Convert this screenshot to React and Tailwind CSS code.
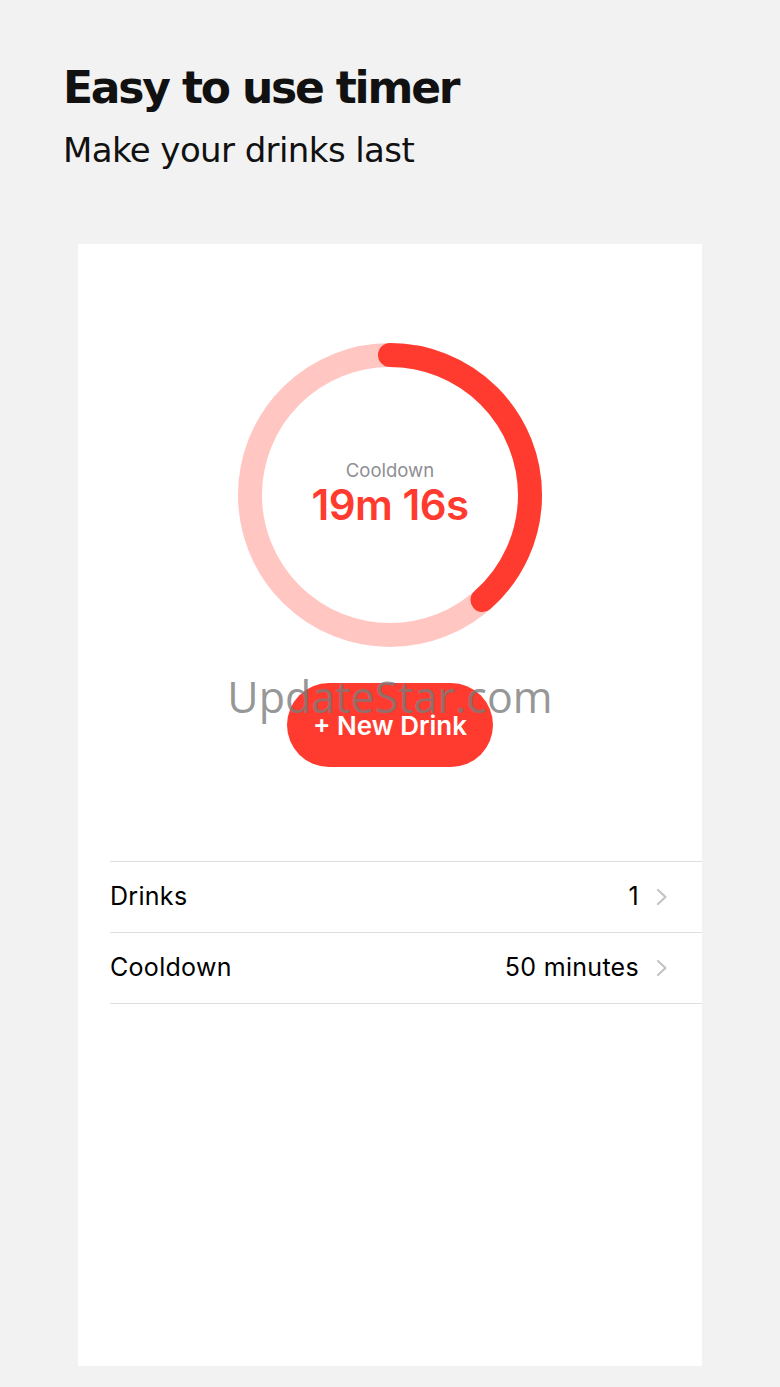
import React from "react";

const RED = "#ff3b30";

function Ring({ progress }) {
  const r = 140;
  const c = 2 * Math.PI * r;
  return (
    <svg width="304" height="304" viewBox="0 0 304 304">
      <circle cx="152" cy="152" r={r} fill="none" stroke="#ffc6c2" strokeWidth="24" />
      <circle
        cx="152"
        cy="152"
        r={r}
        fill="none"
        stroke={RED}
        strokeWidth="24"
        strokeLinecap="round"
        strokeDasharray={`${c * progress} ${c}`}
        transform="rotate(-90 152 152)"
      />
    </svg>
  );
}

function Chevron() {
  return (
    <svg width="12" height="18" viewBox="0 0 12 18" fill="none">
      <path d="M2 2l7.5 7L2 16" stroke="#c4c4c7" strokeWidth="2.2" strokeLinecap="round" strokeLinejoin="round" />
    </svg>
  );
}

function Row({ label, value }) {
  return (
    <div className="flex items-center h-[71px] border-b border-[#dedee2] pr-[34px]">
      <span className="flex-1 text-[25px] tracking-[0.3px] text-black">{label}</span>
      <span className="text-[25px] tracking-[0.3px] text-black mr-[17px]">{value}</span>
      <Chevron />
    </div>
  );
}

export default function App() {
  return (
    <div className="min-h-[1387px] bg-[#f2f2f2] pt-[60px] pb-[21px]" style={{ fontFamily: "'DejaVu Sans', sans-serif" }}>
      <div className="pl-[63px]">
        <h1 className="text-[44px] font-bold leading-[56px] text-[#111] tracking-[-2.2px]">Easy to use timer</h1>
        <p className="text-[34px] leading-[44px] text-[#111] tracking-[-0.6px] mt-[12px]">Make your drinks last</p>
      </div>

      <div className="relative ml-[78px] mt-[72px] w-[624px] h-[1122px] bg-white" style={{ fontFamily: "Inter, sans-serif" }}>
        <div className="flex flex-col items-center pt-[99px]">
          <div className="relative w-[304px] h-[304px]">
            <Ring progress={0.385} />
            <div className="absolute inset-0 flex flex-col items-center justify-center">
              <span className="text-[18.5px] text-[#8e8e93] leading-[22px] mt-[-2px]">Cooldown</span>
              <span className="text-[42px] font-semibold text-[#ff3b30] leading-[48px] tracking-[-0.5px]">19m 16s</span>
            </div>
          </div>
          <button className="mt-[36px] w-[206px] h-[84px] rounded-full bg-[#ff3b30] text-white text-[26px] font-semibold">
            + New Drink
          </button>
        </div>

        <div className="ml-[32px] mt-[94px] border-t border-[#dedee2]">
          <Row label="Drinks" value="1" />
          <Row label="Cooldown" value="50 minutes" />
        </div>

        <div
          className="absolute left-0 right-0 top-[425px] text-center text-[43px] leading-[56px] text-[#7a7a7a]/80 pointer-events-none"
          style={{ fontFamily: "'Open Sans', sans-serif" }}
        >
          UpdateStar.com
        </div>
      </div>
    </div>
  );
}
